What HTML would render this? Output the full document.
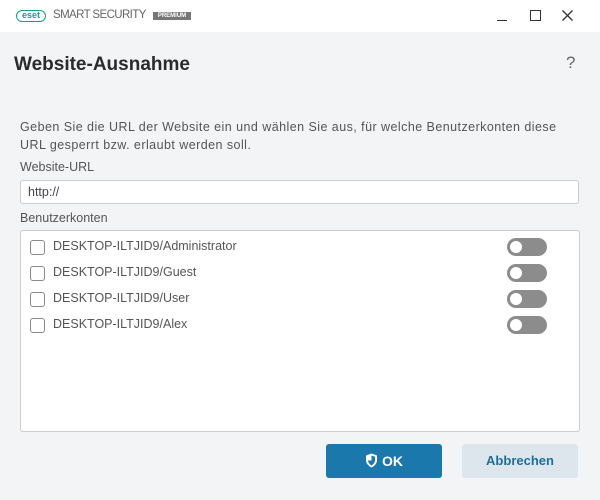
<!DOCTYPE html><html><head><style>
body{margin:0;width:600px;height:500px;background:#f3f4f6;font-family:"Liberation Sans",sans-serif;position:relative;overflow:hidden;color:#555}
.tb{position:absolute;left:0;top:0;width:600px;height:32px;background:#fff}
.abs{position:absolute}
.row{position:absolute;left:0;height:20px;font-size:12.5px;color:#555}
.cb{position:absolute;left:9px;top:2px;width:13px;height:13px;border:1.5px solid #8a8a8a;border-radius:3px;background:#fff}
.tg{position:absolute;left:486px;top:0;width:40px;height:18px;border-radius:9px;background:#8c8c8c}
.tg:after{content:"";position:absolute;left:3px;top:3px;width:12px;height:12px;border-radius:50%;background:#fff}
</style></head><body>
<div class="tb">
 <div class="abs" style="left:16px;top:10px;width:30px;height:12px;border:1.5px solid #1e9a96;border-radius:7px;box-sizing:border-box;font:bold 9px/9px 'Liberation Sans';color:#1e9a96;text-align:center">eset</div>
 <div class="abs" style="left:53px;top:9px;font-size:11.5px;color:#666;letter-spacing:-0.6px">SMART SECURITY</div>
 <div class="abs" style="left:153px;top:12px;width:38px;height:8px;background:#777;color:#fff;font:bold 6px/8px 'Liberation Sans';text-align:center">PREMIUM</div>
 <div class="abs" style="left:497px;top:20px;width:10px;height:1.3px;background:#333"></div>
 <div class="abs" style="left:530px;top:10px;width:9px;height:9px;border:1.3px solid #333"></div>
 <svg class="abs" style="left:562px;top:10px" width="11" height="11"><path d="M0.5 0.5L10.5 10.5M10.5 0.5L0.5 10.5" stroke="#333" stroke-width="1.3"/></svg>
</div>
<div class="abs" style="left:14px;top:54px;font-size:19px;font-weight:bold;color:#2b2b2b">Website-Ausnahme</div>
<div class="abs" style="left:566px;top:53px;font-size:17px;color:#666">?</div>
<div class="abs" style="left:20px;top:118px;width:575px;font-size:12.5px;line-height:18px;white-space:nowrap;letter-spacing:0.45px">Geben Sie die URL der Website ein und wählen Sie aus, für welche Benutzerkonten diese<br>URL gesperrt bzw. erlaubt werden soll.</div>
<div class="abs" style="left:20px;top:160px;font-size:12.5px">Website-URL</div>
<div class="abs" style="left:20px;top:180px;height:22px;background:#fff;border:1px solid #ccc;border-radius:3px;font-size:12.5px;line-height:22px;padding-left:7px;width:550px;color:#444">http://</div>
<div class="abs" style="left:20px;top:211px;font-size:12.5px">Benutzerkonten</div>
<div class="abs" style="left:20px;top:230px;width:558px;height:200px;background:#fff;border:1px solid #ccc;border-radius:3px">
 <div class="row" style="top:7px;width:558px"><div class="cb"></div><span style="position:absolute;left:32px;top:1px">DESKTOP-ILTJID9/Administrator</span><div class="tg"></div></div>
 <div class="row" style="top:33px;width:558px"><div class="cb"></div><span style="position:absolute;left:32px;top:1px">DESKTOP-ILTJID9/Guest</span><div class="tg"></div></div>
 <div class="row" style="top:59px;width:558px"><div class="cb"></div><span style="position:absolute;left:32px;top:1px">DESKTOP-ILTJID9/User</span><div class="tg"></div></div>
 <div class="row" style="top:85px;width:558px"><div class="cb"></div><span style="position:absolute;left:32px;top:1px">DESKTOP-ILTJID9/Alex</span><div class="tg"></div></div>
</div>
<div class="abs" style="left:326px;top:444px;width:116px;height:34px;background:#1b78ad;border-radius:3px;color:#fff;font-weight:bold;font-size:14px;line-height:34px;text-align:center">
 <svg width="13" height="15" viewBox="0 0 13 15" style="vertical-align:-2px;margin-right:4px"><path d="M6.5 0.5L12 2.5V7C12 10.5 9.5 13 6.5 14.5C3.5 13 1 10.5 1 7V2.5Z" fill="#fff"/><path d="M6.5 2.5V12.5C8.5 11.3 10 9.5 10 7V3.8Z M3 7.5H6.5V12.5C4.5 11.3 3.2 9.7 3 7.5Z" fill="#1b78ad"/></svg>OK</div>
<div class="abs" style="left:462px;top:444px;width:116px;height:34px;background:#dde6ed;border-radius:3px;color:#1b6fa0;font-weight:bold;font-size:13px;line-height:34px;text-align:center">Abbrechen</div>
</body></html>
